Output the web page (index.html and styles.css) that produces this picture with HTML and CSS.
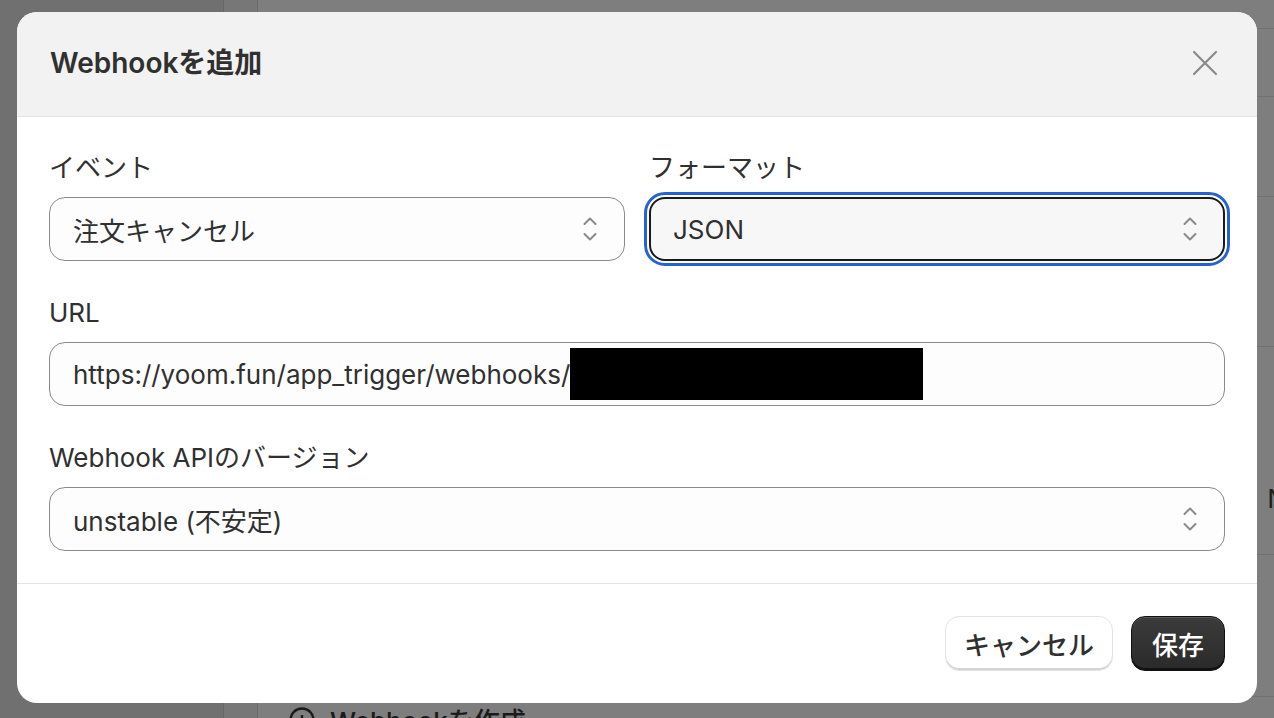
FILE: index.html
```html
<!DOCTYPE html>
<html lang="ja">

<head>
    <meta charset="UTF-8">
    <meta name="viewport" content="width=device-width, initial-scale=1.0">
    <title>Webhookを追加</title>
    <link rel="stylesheet" href="styles.css">
</head>

<body>
    <div class="page">
        <div class="sidebar"></div>
        <div class="rail"></div>
        <div class="main">
            <div class="row row-a"></div>
            <div class="row row-b"></div>
            <div class="row row-c"></div>
            <div class="row row-d"></div>
            <div class="row row-e"><span class="cell-end">NONE</span></div>
            <div class="row row-f"></div>
            <div class="row row-g">
                <span class="create">
                    <svg width="28" height="28" viewBox="0 0 28 28" fill="none" stroke="#1a1a1a" stroke-width="2.4">
                        <circle cx="14" cy="14" r="11.5" />
                        <path d="M14 9v10M9 14h10" />
                    </svg>
                    Webhookを作成
                </span>
            </div>
        </div>
    </div>

    <div class="backdrop">
        <div class="modal">
            <div class="modal-header">
                <div class="modal-title">Webhookを追加</div>
                <button class="close-btn" aria-label="閉じる">
                    <svg width="26" height="26" viewBox="0 0 26 26" fill="none" stroke="#8a8a8a" stroke-width="2.2" stroke-linecap="round">
                        <path d="M2 2l22 22M24 2L2 24" />
                    </svg>
                </button>
            </div>

            <div class="modal-body">
                <div class="field-row">
                    <div class="field">
                        <label class="field-label">イベント</label>
                        <div class="select">
                            <span>注文キャンセル</span>
                            <svg class="chevrons" width="14" height="26" viewBox="0 0 14 26" fill="none" stroke="#8a8a8a" stroke-width="2" stroke-linecap="round" stroke-linejoin="round">
                                <path d="M1.5 8L7 2.5 12.5 8" />
                                <path d="M1.5 18L7 23.5 12.5 18" />
                            </svg>
                        </div>
                    </div>
                    <div class="field">
                        <label class="field-label">フォーマット</label>
                        <div class="select focused">
                            <span>JSON</span>
                            <svg class="chevrons" width="14" height="26" viewBox="0 0 14 26" fill="none" stroke="#8a8a8a" stroke-width="2" stroke-linecap="round" stroke-linejoin="round">
                                <path d="M1.5 8L7 2.5 12.5 8" />
                                <path d="M1.5 18L7 23.5 12.5 18" />
                            </svg>
                        </div>
                    </div>
                </div>

                <div class="field">
                    <label class="field-label">URL</label>
                    <div class="text-input">
                        <span>https://yoom.fun/app_trigger/webhooks/</span><span class="redacted"></span>
                    </div>
                </div>

                <div class="field">
                    <label class="field-label">Webhook APIのバージョン</label>
                    <div class="select">
                        <span>unstable (不安定)</span>
                        <svg class="chevrons" width="14" height="26" viewBox="0 0 14 26" fill="none" stroke="#8a8a8a" stroke-width="2" stroke-linecap="round" stroke-linejoin="round">
                            <path d="M1.5 8L7 2.5 12.5 8" />
                            <path d="M1.5 18L7 23.5 12.5 18" />
                        </svg>
                    </div>
                </div>
            </div>

            <div class="modal-footer">
                <button class="btn btn-secondary">キャンセル</button>
                <button class="btn btn-primary">保存</button>
            </div>
        </div>
    </div>
</body>

</html>
```

FILE: styles.css
```css
* {
    box-sizing: border-box;
}

body {
    margin: 0;
    font-family: Inter, "Noto Sans CJK JP", sans-serif;
    color: #303030;
    overflow: hidden;
}

/* dimmed page behind the modal */
.page {
    display: flex;
    height: 100vh;
    background-color: #7e7e7e;
}

.sidebar {
    width: 224px;
    background-color: #707070;
    border-right: 1px solid #676767;
}

.rail {
    width: 34px;
    background-color: #777777;
    border-right: 1px solid #6b6b6b;
}

.main {
    flex: 1;
    display: flex;
    flex-direction: column;
    overflow: hidden;
}

.row {
    flex-shrink: 0;
    border-bottom: 1px solid #727272;
}

.row-a { height: 29px; }
.row-b { height: 68px; }
.row-c { height: 100px; }
.row-d { height: 150px; }
.row-e {
    height: 208px;
    display: flex;
    align-items: flex-end;
    justify-content: flex-end;
    padding-bottom: 40px;
    overflow: hidden;
}
.row-f { height: 142px; }

.cell-end {
    font-size: 26px;
    color: #1e1e1e;
    margin-right: -68px;
}

.row-g {
    border-bottom: none;
    padding: 4px 0 0 30px;
}

.create {
    display: flex;
    align-items: center;
    gap: 14px;
    font-size: 26px;
    font-weight: 500;
    color: #1a1a1a;
}

/* modal */
.backdrop {
    position: fixed;
    inset: 0;
}

.modal {
    position: absolute;
    top: 12px;
    left: 17px;
    width: 1240px;
    background-color: #ffffff;
    border-radius: 20px;
    overflow: hidden;
}

.modal-header {
    display: flex;
    align-items: center;
    justify-content: space-between;
    height: 105px;
    padding: 0 39px 2px 33px;
    background-color: #f2f2f2;
    border-bottom: 1px solid #e3e3e3;
}

.modal-title {
    font-size: 28px;
    line-height: 36px;
    font-weight: 600;
    color: #303030;
}

.close-btn {
    background: none;
    border: none;
    padding: 0;
    display: flex;
    cursor: pointer;
}

.modal-body {
    display: flex;
    flex-direction: column;
    gap: 36px;
    padding: 35px 32px 32px;
}

.field-row {
    display: flex;
    gap: 24px;
}

.field-row .field {
    flex: 1;
}

.field {
    display: flex;
    flex-direction: column;
    gap: 13px;
}

.field-label {
    font-size: 26px;
    line-height: 32px;
    color: #303030;
}

.select,
.text-input {
    display: flex;
    align-items: center;
    height: 64px;
    padding: 0 27px 0 23px;
    font-size: 26px;
    color: #303030;
    background-color: #fdfdfd;
    border: 1px solid #8a8a8a;
    border-radius: 16px;
}

.select {
    justify-content: space-between;
}

.select.focused {
    background-color: #f7f7f7;
    border: 2px solid #1a1a1a;
    padding: 0 26px 0 22px;
    outline: 3px solid #2463d3;
    outline-offset: 2px;
}

.redacted {
    display: inline-block;
    width: 353px;
    height: 52px;
    background-color: #000000;
}

.modal-footer {
    display: flex;
    justify-content: flex-end;
    gap: 18px;
    padding: 32px;
    border-top: 1px solid #e3e3e3;
}

.btn {
    height: 55px;
    padding: 0 18px;
    font-family: inherit;
    font-size: 26px;
    font-weight: 500;
    border-radius: 14px;
    cursor: pointer;
    white-space: nowrap;
}

.btn-secondary {
    background-color: #ffffff;
    color: #303030;
    border: 1px solid #e3e3e3;
    box-shadow: inset 0 -2px 0 #d4d4d4;
}

.btn-primary {
    padding: 0 20px;
    background: linear-gradient(#3b3b3b, #2a2a2a);
    color: #ffffff;
    border: 1px solid #111111;
    box-shadow: inset 0 1px 0 #5a5a5a, inset 0 -2px 0 #111111;
}
```
